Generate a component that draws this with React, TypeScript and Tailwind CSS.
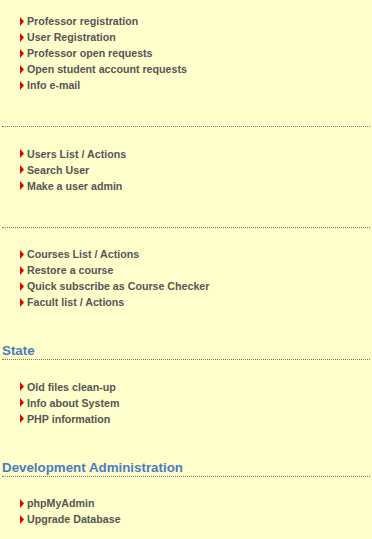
const sections: { title: string; items: string[] }[] = [
  {
    title: '',
    items: [
      'Professor registration',
      'User Registration',
      'Professor open requests',
      'Open student account requests',
      'Info e-mail',
    ],
  },
  {
    title: '',
    items: ['Users List / Actions', 'Search User', 'Make a user admin'],
  },
  {
    title: '',
    items: [
      'Courses List / Actions',
      'Restore a course',
      'Quick subscribe as Course Checker',
      'Facult list / Actions',
    ],
  },
  {
    title: 'State',
    items: ['Old files clean-up', 'Info about System', 'PHP information'],
  },
  {
    title: 'Development Administration',
    items: ['phpMyAdmin', 'Upgrade Database'],
  },
];

function Arrow() {
  return (
    <svg width="4" height="9" viewBox="0 0 4 9" className="shrink-0">
      <polygon points="0,0 4,4.5 0,9" fill="#e00000" />
    </svg>
  );
}

function LinkList({ items }: { items: string[] }) {
  return (
    <ul className="pl-[18px]">
      {items.map((item) => (
        <li key={item} className="flex h-4 items-center gap-[3px]">
          <Arrow />
          <a className="text-[10.67px] font-bold leading-4 text-[#555555]">{item}</a>
        </li>
      ))}
    </ul>
  );
}

export default function App() {
  return (
    <div
      className="min-h-[539px] w-full bg-[#ffffcc] px-[2px] pt-[13px]"
      style={{ fontFamily: '"Liberation Sans", Arial, sans-serif' }}
    >
      {sections.map((section, i) => (
        <div key={i}>
          {i > 0 &&
            (section.title ? (
              <h3 className="mt-[32.2px] mb-[18.4px] border-b border-dotted border-[#777777] pt-[1px] text-[13.33px] font-bold leading-4 text-[#4a7cc4]">
                {section.title}
              </h3>
            ) : (
              <hr className="mt-[33.2px] mb-[18.4px] border-0 border-b border-dotted border-[#777777]" />
            ))}
          <LinkList items={section.items} />
        </div>
      ))}
    </div>
  );
}
